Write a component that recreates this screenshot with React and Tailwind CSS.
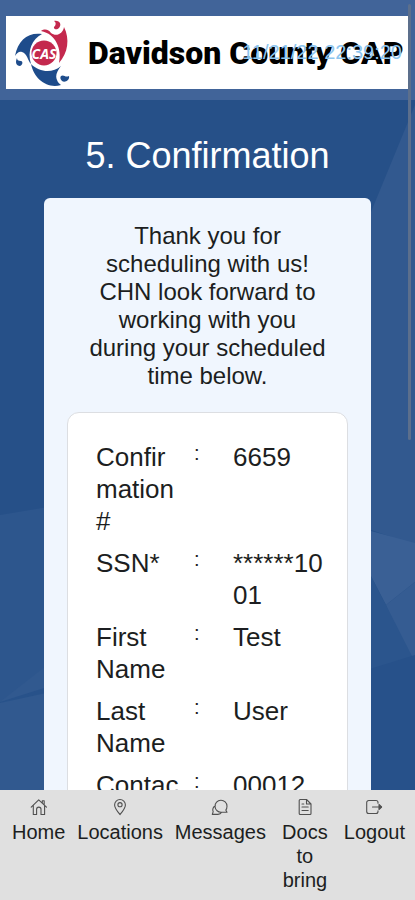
import React from "react";

const details = [
  { label: ["Confir", "mation", "#"], value: ["6659"] },
  { label: ["SSN*"], value: ["******10", "01"] },
  { label: ["First", "Name"], value: ["Test"] },
  { label: ["Last", "Name"], value: ["User"] },
  { label: ["Contac", "t #"], value: ["00012", "34567"] },
];

function Lines({ parts }) {
  return parts.map((part, index) => (
    <React.Fragment key={part}>
      {index > 0 && <br />}
      {part}
    </React.Fragment>
  ));
}

function Icon({ children }) {
  return (
    <svg
      viewBox="0 0 18 18"
      className="h-[18px] w-[18px]"
      fill="none"
      stroke="#505050"
      strokeWidth="1.1"
      strokeLinejoin="round"
      strokeLinecap="round"
      aria-hidden="true"
    >
      {children}
    </svg>
  );
}

const navItems = [
  {
    label: "Home",
    icon: (
      <Icon>
        <path d="M1.2 9.2 8.7 1.8 16.5 9.2M3.3 7.6v8.9h3.3v-5.2a2.2 2.2 0 0 1 4.4 0v5.2h3.6V7.4M12.3 5V2.7h1.9v4.2" />
      </Icon>
    ),
  },
  {
    label: "Locations",
    icon: (
      <Icon>
        <path d="M9 16.6C6.4 13.4 3.6 10 3.6 6.9a5.4 5.4 0 0 1 10.8 0c0 3.100-2.800 6.500-5.400 9.700Z" />
        <circle cx="9" cy="6.700" r="2.100" />
      </Icon>
    ),
  },
  {
    label: "Messages",
    icon: (
      <Icon>
        <path d="M16 14.200H10.500A6 6 0 1 1 16 8.200c0 1.600-.4 2.900-1.200 3.900ZM4.400 7.800C2.300 8.800 1 11.300 2.200 13.700l-.9 2.700H7c1.600 0 2.900-.8 3.600-2.100" />
      </Icon>
    ),
  },
  {
    label: "Docs to bring",
    icon: (
      <Icon>
        <path d="M4.200 1.500h6.300L15 6v9.500a1 1 0 0 1-1 1H4.200a1 1 0 0 1-1-1v-13a1 1 0 0 1 1-1ZM10.500 1.500V6H15M6 6h1.800M6 9h6.200M6 12.500h6.200" />
      </Icon>
    ),
  },
  {
    label: "Logout",
    icon: (
      <Icon>
        <path d="M13 5.200V4.500a2 2 0 0 0-2-2H3.700a2 2 0 0 0-2 2v9a2 2 0 0 0 2 2H11a2 2 0 0 0 2-2v-.8M7.500 9h9" />
        <path d="M14 6.500 16.600 9 14 11.500Z" fill="#505050" />
      </Icon>
    ),
  },
];

function Backdrop() {
  return (
    <svg
      className="absolute inset-0 h-full w-full"
      viewBox="0 0 415 900"
      preserveAspectRatio="none"
      aria-hidden="true"
    >
      <rect width="415" height="900" fill="#265088" />
      <path d="M415 105 371 212V530L415 545Z" fill="#32598f" />
      <path d="M0 515 60 505V800H0Z" fill="#2d568d" />
      <path d="M0 702 60 655V800H0Z" fill="#31598f" />
      <path d="M0 702 60 683V690L0 703Z" fill="#28528a" />
      <path d="M360 528 415 543V582L386 605 360 555Z" fill="#3a6095" />
      <path d="M386 605 415 582V665L404 650Z" fill="#355c92" />
      <path d="M360 555 386 605 415 662V800H360Z" fill="#2b558d" />
      <path d="M360 672 415 655V800H360Z" fill="#27518a" />
    </svg>
  );
}

function Logo() {
  return (
    <svg viewBox="0 0 56 68" className="h-[68px] w-14 shrink-0" role="img" aria-label="CAS">
      <path d="M1 37C4 21 14 13 28 15 18 20 13 32 17 45 14 42 13 34 8 33 5 32 3 34 1 37Z" fill="#1e4c8b" />
      <path d="M27 12C31 9 35 11 37 14 42 18 49 15 50 8 56 20 54 34 45 44 48 30 42 15 27 12Z" fill="#c4294e" />
      <path d="M17 45C26 54 39 54 47 47 43 52 41 57 43 61 44 64 46 65 47 66 33 70 20 60 17 45Z" fill="#1e4c8b" />
      <circle cx="30" cy="34" r="12.500" fill="#c4294e" />
      <path d="M40 2C46 1 48 6 45 9 42 12 38 9 41 7 42 5 42 3 40 2Z" fill="#c4294e" />
      <path d="M3 39C1 43 2 47 6 47 9 46 9 42 7 42 4 42 3 41 3 39Z" fill="#1e4c8b" />
      <path d="M47 57C50 55 51 59 55 57 56 61 51 64 48 62 46 60 46 58 47 57Z" fill="#1e4c8b" />
      <text
        x="30"
        y="40"
        textAnchor="middle"
        fill="white"
        fontSize="14"
        fontWeight="700"
        fontStyle="italic"
        fontFamily="Open Sans, sans-serif"
      >
        CAS
      </text>
    </svg>
  );
}

export default function App() {
  return (
    <div className="relative flex h-screen flex-col overflow-hidden bg-[#265088] font-['Liberation_Sans',Arial,sans-serif] text-[#1c1e21]">
      <Backdrop />
      <header className="relative bg-[#416499] px-1.5 pt-4 pb-[11px]">
        <div className="relative flex h-[73px] items-center bg-white pl-2">
          <Logo />
          <span className="ml-[18px] font-['Roboto',sans-serif] text-[32px] font-black whitespace-nowrap text-black">
            Davidson County CAP
          </span>
          <time className="absolute top-6 right-[7px] text-xl leading-6 text-[#8cc5ef]">
            11/21/22 22:39:20
          </time>
        </div>
      </header>

      <main className="relative min-h-0 flex-1 overflow-hidden px-11 pt-8">
        <h1 className="text-center text-4xl leading-12 text-white">5. Confirmation</h1>
        <section className="mt-[18px] rounded-md bg-[#f0f6fe] px-[23px] pt-6">
          <p className="px-4 text-center text-2xl leading-7">
            Thank you for scheduling with us! CHN look forward to working with you during your
            scheduled time below.
          </p>
          <div className="mt-[22px] rounded-xl border border-[#dcdee2] bg-white pt-7 pr-5 pb-8 pl-7">
            <table className="w-full table-fixed text-[26px] leading-8">
              <colgroup>
                <col className="w-[88px]" />
                <col className="w-[49px]" />
                <col />
              </colgroup>
              <tbody>
                {details.map(({ label, value }) => (
                  <tr key={label[0]} className="align-top">
                    <th scope="row" className="pb-2.5 text-left font-normal">
                      <Lines parts={label} />
                    </th>
                    <td className="pb-2.5 pl-2.5 text-xl leading-6">:</td>
                    <td className="pb-2.5">
                      <Lines parts={value} />
                    </td>
                  </tr>
                ))}
              </tbody>
            </table>
          </div>
        </section>
      </main>

      <nav className="relative flex h-[110px] shrink-0 items-start justify-between bg-[#e0e0e0] pt-2 pr-2.5 pl-3 text-xl leading-6">
        {navItems.map(({ label, icon }) => (
          <a
            key={label}
            href="#"
            className={
              label === "Docs to bring"
                ? "flex w-[54px] flex-col items-center text-center"
                : "flex flex-col items-center"
            }
          >
            {icon}
            <span className="mt-1">{label}</span>
          </a>
        ))}
      </nav>

      <div className="absolute top-1 right-1 h-[436px] w-[3px] rounded-full bg-[#5c6f8c]" />
    </div>
  );
}
